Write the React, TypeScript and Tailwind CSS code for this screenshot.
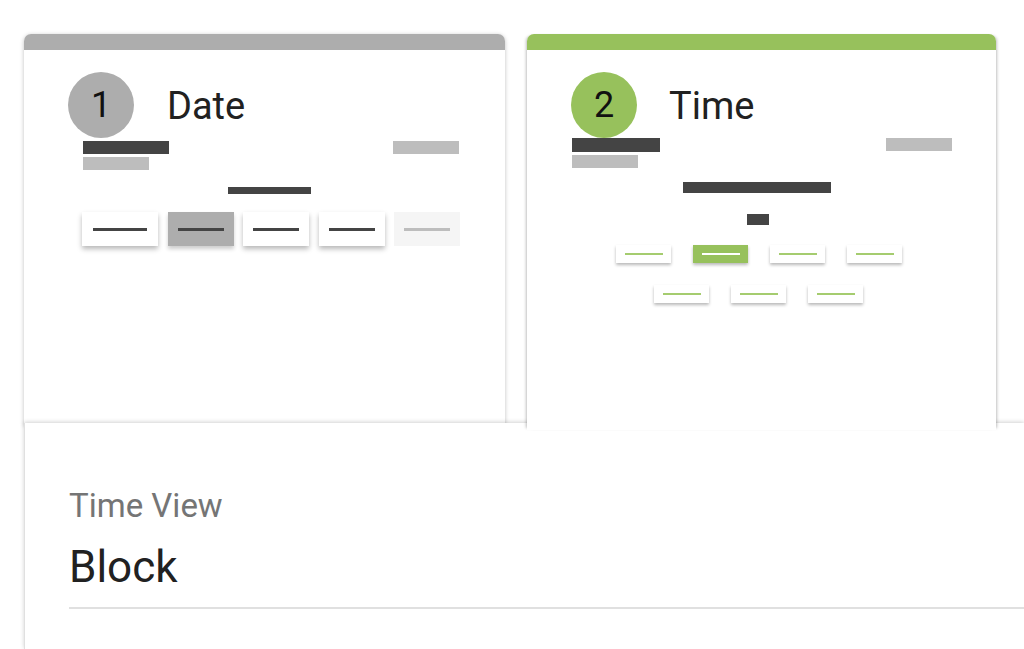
import React from 'react';

const font = { fontFamily: 'Roboto, "Noto Sans", sans-serif' };

function DateCard() {
  const buttons = [
    { w: 'w-[76px]', kind: 'normal' },
    { w: 'w-[66px]', kind: 'selected' },
    { w: 'w-[66px]', kind: 'normal' },
    { w: 'w-[66px]', kind: 'normal' },
    { w: 'w-[66px]', kind: 'disabled' },
  ];

  return (
    <div className="relative z-0 w-[481px] h-[391px] shrink-0 rounded-t-[7px] bg-white shadow-[0_1px_4px_rgba(0,0,0,0.25)] overflow-hidden">
      <div className="h-[16px] bg-[#adadad]" />
      <div className="flex items-center pt-[22px] pl-[44px]">
        <div className="w-[66px] h-[66px] rounded-full bg-[#adadad] flex items-center justify-center text-[36px] text-[#111]">1</div>
        <div className="ml-[33px] text-[38px] text-[#212121] leading-none pt-[2px]">Date</div>
      </div>

      <div className="mt-[3px] ml-[59px] mr-[46px] flex justify-between">
        <div>
          <div className="w-[86px] h-[13px] bg-[#444]" />
          <div className="mt-[3px] w-[66px] h-[13px] bg-[#bdbdbd]" />
        </div>
        <div className="w-[66px] h-[13px] bg-[#bdbdbd]" />
      </div>

      <div className="mt-[17px] ml-[204px] w-[83px] h-[7px] bg-[#444]" />

      <div className="mt-[18px] ml-[58px] flex gap-[9.5px]">
        {buttons.map((b, i) => (
          <div
            key={i}
            className={`${b.w} h-[34px] flex items-center justify-center ${
              b.kind === 'selected'
                ? 'bg-[#adadad] shadow-[0_3px_4px_rgba(0,0,0,0.2)]'
                : b.kind === 'disabled'
                ? 'bg-[#f5f5f5]'
                : 'bg-white shadow-[0_3px_5px_rgba(0,0,0,0.28)]'
            }`}
          >
            <div
              className={`h-[3px] ${i === 0 ? 'w-[54px]' : 'w-[46px]'} ${
                b.kind === 'disabled' ? 'bg-[#bdbdbd]' : 'bg-[#444]'
              }`}
            />
          </div>
        ))}
      </div>
    </div>
  );
}

function TimeBtn({ active }: { active?: boolean }) {
  return (
    <div
      className={`w-[55px] h-[18px] flex items-center justify-center shadow-[0_2px_3px_rgba(0,0,0,0.28)] ${
        active ? 'bg-[#97c15c]' : 'bg-white'
      }`}
    >
      <div className={`w-[38px] h-[2px] ${active ? 'bg-white' : 'bg-[#a5cc6f]'}`} />
    </div>
  );
}

function TimeCard() {
  return (
    <div className="relative z-20 w-[469px] h-[396px] shrink-0 rounded-t-[7px] bg-white shadow-[3px_0_3px_-2px_rgba(0,0,0,0.25),-3px_0_3px_-2px_rgba(0,0,0,0.25)] overflow-hidden">
      <div className="h-[16px] bg-[#97c15c]" />
      <div className="flex items-center pt-[22px] pl-[44px]">
        <div className="w-[66px] h-[66px] rounded-full bg-[#97c15c] flex items-center justify-center text-[36px] text-[#111]">2</div>
        <div className="ml-[32px] text-[38px] text-[#212121] leading-none pt-[2px]">Time</div>
      </div>

      <div className="ml-[45px] mr-[44px] flex justify-between">
        <div>
          <div className="w-[88px] h-[14px] bg-[#444]" />
          <div className="mt-[3px] w-[66px] h-[13px] bg-[#bdbdbd]" />
        </div>
        <div className="w-[66px] h-[13px] bg-[#bdbdbd]" />
      </div>

      <div className="mt-[14px] ml-[156px] w-[148px] h-[11px] bg-[#444]" />
      <div className="mt-[21px] ml-[220px] w-[22px] h-[11px] bg-[#444]" />

      <div className="mt-[20px] ml-[89px] flex gap-[22px]">
        <TimeBtn />
        <TimeBtn active />
        <TimeBtn />
        <TimeBtn />
      </div>
      <div className="mt-[22px] ml-[127px] flex gap-[22px]">
        <TimeBtn />
        <TimeBtn />
        <TimeBtn />
      </div>
    </div>
  );
}

export default function App() {
  return (
    <div className="w-[1024px] h-[649px] overflow-hidden bg-white" style={font}>
      <div className="h-[423px] pt-[34px] pl-[24px] flex items-start gap-[22px]">
        <DateCard />
        <TimeCard />
      </div>

      <div className="relative z-10 ml-[24px] h-[226px] bg-white shadow-[0_-1px_4px_rgba(0,0,0,0.18)] border-l border-[#e0e0e0]">
        <div className="pl-[44px] pt-[66px]">
          <div className="text-[33px] leading-none text-[#757575]">Time View</div>
          <div className="mt-[23px] text-[44px] leading-none text-[#212121]">Block</div>
          <div className="mt-[18px] h-[2px] bg-[#e0e0e0]" />
        </div>
      </div>
    </div>
  );
}
